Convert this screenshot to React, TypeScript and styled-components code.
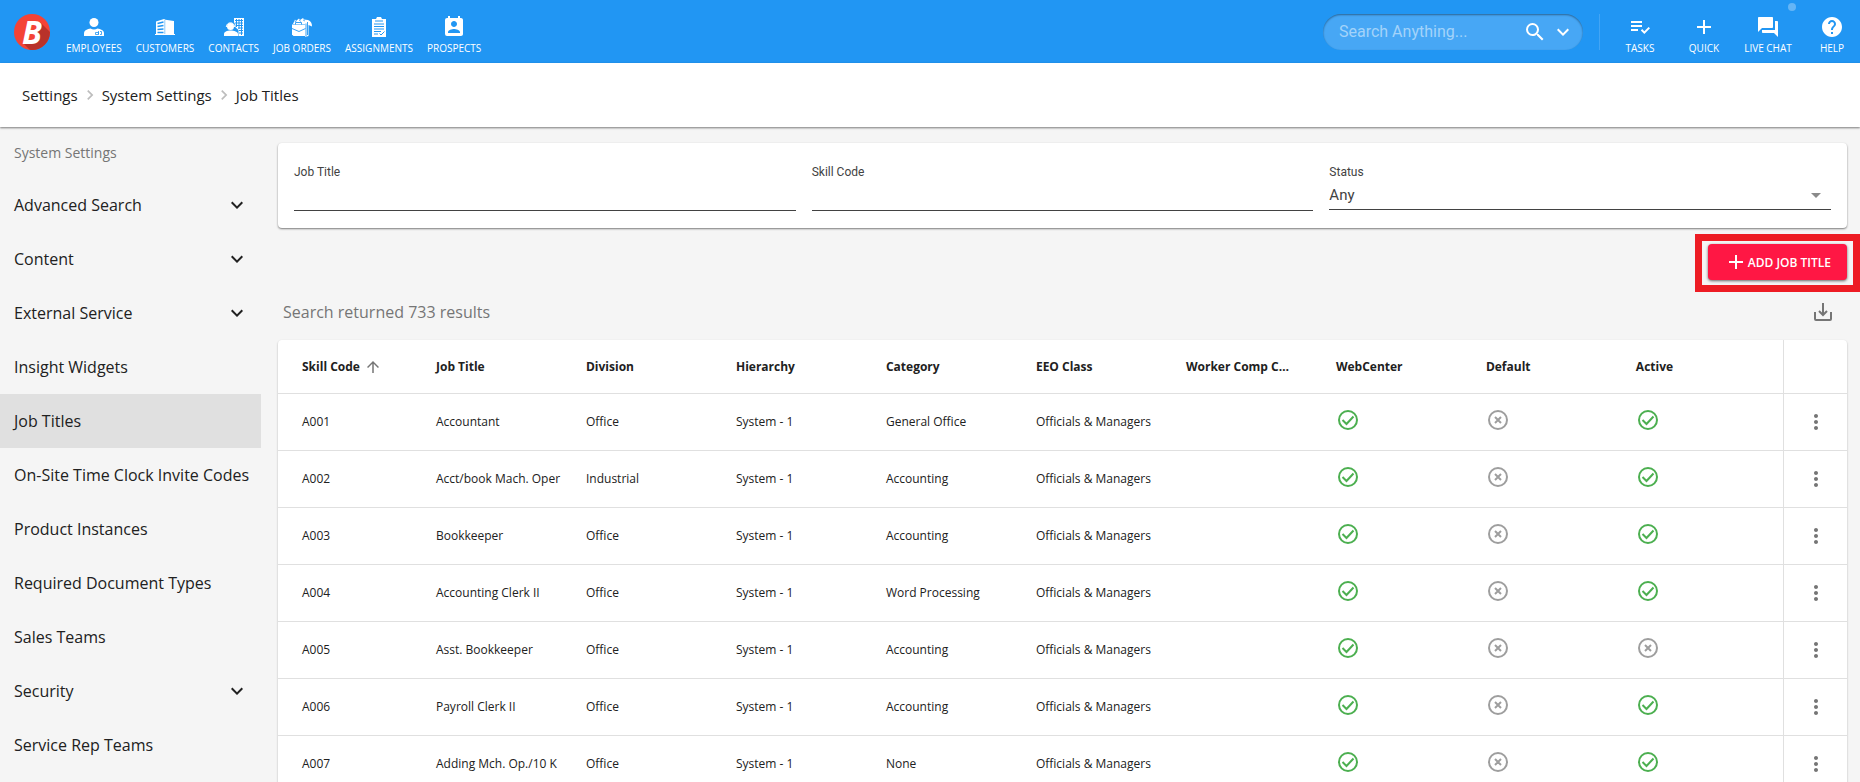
import React from 'react';
import styled, { createGlobalStyle, css } from 'styled-components';
import {
  MdSearch,
  MdExpandMore,
  MdPlaylistAddCheck,
  MdAdd,
  MdForum,
  MdHelp,
  MdPermContactCalendar,
  MdChevronRight,
  MdArrowUpward,
  MdArrowDropDown,
  MdMoreVert,
} from 'react-icons/md';

const sans = '"Open Sans", "Noto Sans", sans-serif';
const roboto = 'Roboto, "Liberation Sans", sans-serif';

const GlobalStyle = createGlobalStyle`
  *, *::before, *::after { box-sizing: border-box; }
  body {
    margin: 0;
    background: #f5f5f5;
    color: #212121;
    font-family: ${sans};
    font-size: 16px;
  }
  button, input, select { font: inherit; color: inherit; }
  a { color: inherit; text-decoration: none; }
`;

const Page = styled.div`
  display: flex;
  flex-direction: column;
  height: 100vh;
  overflow: hidden;
`;

const TopBar = styled.header`
  display: flex;
  flex: none;
  align-items: center;
  height: 63px;
  padding-left: 14px;
  background: #2196f3;
  color: #fff;
`;

const Logo = styled.a`
  position: relative;
  display: flex;
  align-items: center;
  justify-content: center;
  width: 36px;
  height: 36px;
`;

const LogoDisc = styled.svg`
  position: absolute;
  inset: 0;
`;

const LogoLetter = styled.span`
  position: relative;
  font-size: 32px;
  font-style: italic;
  font-weight: 700;
  line-height: 36px;
`;

const MainNav = styled.nav`
  display: flex;
  gap: 14px;
  margin-left: 16px;
`;

const iconLabel = css`
  display: flex;
  flex-direction: column;
  align-items: center;
  gap: 2px;
  padding: 0;
  padding-top: 7px;
  border: 0;
  background: none;
  font-size: 10px;
  line-height: 14px;
  white-space: nowrap;
  text-transform: uppercase;
  cursor: pointer;
  svg { display: block; }
`;

const NavLink = styled.a`
  ${iconLabel}
`;

const ToolButton = styled.button`
  ${iconLabel}
  position: relative;
  min-width: 56px;
`;

const StatusDot = styled.span`
  position: absolute;
  top: -5px;
  right: 0;
  width: 8px;
  height: 8px;
  border-radius: 50%;
  background: #64b5f6;
`;

const SearchBox = styled.form`
  display: flex;
  align-items: center;
  width: 260px;
  height: 36px;
  margin-left: auto;
  padding: 0 6px 0 16px;
  border-radius: 18px;
  background: #47a7f5;
  box-shadow: inset 0 1px 2px rgba(0, 0, 0, 0.4);
`;

const SearchInput = styled.input`
  flex: 1;
  min-width: 0;
  padding: 0;
  border: 0;
  outline: 0;
  background: none;
  font-family: ${roboto};
  &::placeholder { color: #a3d3fa; opacity: 1; }
`;

const GhostButton = styled.button`
  display: flex;
  align-items: center;
  justify-content: center;
  padding: 0 2px;
  border: 0;
  background: none;
  cursor: pointer;
`;

const BarDivider = styled.span`
  width: 1px;
  height: 36px;
  margin: 0 12px 0 16px;
  background: #42a5f5;
`;

const Tools = styled.div`
  display: flex;
  gap: 8px;
`;

const Breadcrumbs = styled.nav`
  display: flex;
  flex: none;
  align-items: center;
  height: 64px;
  padding-left: 22px;
  background: #fff;
  box-shadow: 0 1px 2px rgba(0, 0, 0, 0.5);
  font-size: 15px;
  z-index: 1;
  svg { margin: 0 2px; color: #bdbdbd; }
`;

const Body = styled.div`
  display: flex;
  flex: 1;
  min-height: 0;
`;

const Sidebar = styled.aside`
  flex: none;
  width: 261px;
  padding-top: 16px;
`;

const SidebarTitle = styled.h2`
  margin: 0 0 15px;
  padding-left: 14px;
  color: #757575;
  font-size: 14px;
  font-weight: 400;
  line-height: 20px;
`;

const SidebarItem = styled.a<{ $active?: boolean }>`
  display: flex;
  align-items: center;
  justify-content: space-between;
  height: 54px;
  padding: 0 12px 0 14px;
  background: ${(p) => (p.$active ? '#e0e0e0' : 'transparent')};
  white-space: nowrap;
`;

const Main = styled.main`
  flex: 1;
  min-width: 0;
  padding: 16px 0 0 17px;
`;

const FilterCard = styled.form`
  display: flex;
  align-items: flex-start;
  gap: 16px;
  height: 85px;
  margin-right: 13px;
  padding: 21px 16px 0;
  border-radius: 4px;
  background: #fff;
  box-shadow: 0 1px 2px rgba(0, 0, 0, 0.5);
`;

const Field = styled.label`
  display: flex;
  flex: 1;
  flex-direction: column;
  min-width: 0;
  color: #424242;
  font-family: ${roboto};
  font-size: 12px;
  line-height: 16px;
`;

const TextInput = styled.input`
  width: 100%;
  height: 31px;
  padding: 0;
  border: 0;
  border-bottom: 1px solid #424242;
  border-radius: 0;
  outline: 0;
  background: none;
  font-size: 15px;
`;

const SelectWrap = styled.span`
  display: flex;
  align-items: center;
  height: 30px;
  border-bottom: 1px solid #424242;
`;

const SelectInput = styled.select`
  flex: 1;
  height: 28px;
  padding: 0;
  border: 0;
  outline: 0;
  appearance: none;
  background: none;
  font-size: 15px;
`;

const SelectArrow = styled(MdArrowDropDown)`
  margin-right: 3px;
  color: #8a8a8a;
`;

const Actions = styled.div`
  display: flex;
  justify-content: flex-end;
  padding-top: 6px;
`;

const Highlight = styled.div`
  padding: 3px 6px 5px;
  border: 7px solid #ed1c24;
`;

const AddButton = styled.button`
  display: flex;
  align-items: center;
  height: 36px;
  padding: 0 16px;
  border: 0;
  border-radius: 4px;
  background: #ff1744;
  box-shadow: 0 1px 3px rgba(0, 0, 0, 0.6);
  color: #fff;
  font-size: 12px;
  font-weight: 600;
  white-space: nowrap;
  cursor: pointer;
`;

const ResultsBar = styled.div`
  display: flex;
  align-items: center;
  justify-content: space-between;
  height: 48px;
  margin-right: 13px;
  padding: 0 10px 8px 5px;
  color: #757575;
`;

const TableCard = styled.div`
  margin-right: 13px;
  border-radius: 4px 4px 0 0;
  background: #fff;
  box-shadow: 0 1px 2px rgba(0, 0, 0, 0.3);
`;

const Table = styled.table`
  width: 100%;
  border-collapse: separate;
  border-spacing: 0;
  table-layout: fixed;
  font-size: 12px;
  line-height: 16px;
  text-align: left;
`;

const cell = css`
  overflow: hidden;
  border-bottom: 1px solid #e0e0e0;
  text-overflow: ellipsis;
  white-space: nowrap;
  &:first-child { padding-left: 24px; }
  &:last-child {
    padding: 0;
    border-left: 1px solid #e0e0e0;
  }
`;

const HeadCell = styled.th`
  ${cell}
  height: 54px;
  padding: 0 38px 0 8px;
  font-weight: 700;
  &:first-child { padding-right: 8px; }
`;

const Cell = styled.td`
  ${cell}
  height: 57px;
  padding: 0 8px;
`;

const IconCell = styled(Cell)`
  padding-bottom: 4px;
  svg { display: block; }
`;

const SortButton = styled.button`
  display: flex;
  align-items: center;
  gap: 4px;
  padding: 0;
  border: 0;
  background: none;
  font-weight: 700;
  cursor: pointer;
  svg { color: #757575; }
`;

const RowMenu = styled(GhostButton)`
  width: 100%;
  padding: 0;
  color: #757575;
`;

const DataCol = styled.col`
  width: 9.56%;
`;

const MenuCol = styled.col`
  width: 64px;
`;

const BrandMark = () => (
  <>
    <LogoDisc width="36" height="36" viewBox="0 0 36 36" aria-hidden="true">
      <defs>
        <clipPath id="disc">
          <circle cx="18" cy="18" r="18" />
        </clipPath>
      </defs>
      <circle cx="18" cy="18" r="18" fill="#f44336" />
      <path d="M26 8L40 22V40H20L9 29L22 28Z" fill="#b9322a" clipPath="url(#disc)" />
    </LogoDisc>
    <LogoLetter>B</LogoLetter>
  </>
);

const glyph = {
  width: 24,
  height: 24,
  viewBox: '-2 -2 24 24',
  fill: 'currentColor',
  'aria-hidden': true,
};

const EmployeesIcon = () => (
  <svg {...glyph}>
    <circle cx="10" cy="5.500" r="4.500" />
    <path d="M0 19v-2.500C0 13 3.500 12 6.500 11.500c2 1.300 5 1.300 7 0 3 .5 6.500 1.500 6.500 5V19z" />
    <path d="M11.500 15.500h3v2h-3zM14.500 14v3.500M16 14.500h1.500v3H16" fill="none" stroke="#2196f3" strokeWidth=".8" />
  </svg>
);

const CustomersIcon = () => (
  <svg {...glyph}>
    <path d="M1 4.500L9 2l1.500.7L19 4v13.500H1z" />
    <path d="M2.500 6.500L8.500 5M2.500 9.500l6-1M2.500 12.500l6-.5M2.500 15.500h6" stroke="#2196f3" strokeWidth="1.300" />
    <path d="M9.800 3v14" stroke="#2196f3" strokeWidth=".5" />
    <path d="M0 17.500h20" stroke="currentColor" />
  </svg>
);

const ContactsIcon = () => (
  <svg {...glyph}>
    <path d="M10 1h10v18h-5.500v-6L10 9z" />
    <path d="M12.500 2v8M15 2v10M17.500 2v16M11 3.500h8M11 6h8M12 8.500h7M14 11h5M15 13.500h4M15 16h4" stroke="#2196f3" />
    <circle cx="6.500" cy="9" r="5" fill="#2196f3" />
    <circle cx="6.500" cy="9.500" r="3.500" />
    <path d="M0 19v-2c0-2.400 3-3.600 6.500-3.600S14 14.600 14 17v2z" />
    <path d="M2.300 10a4.200 4.200 0 018.400 0" fill="none" stroke="currentColor" />
  </svg>
);

const JobOrdersIcon = () => (
  <svg {...glyph}>
    <path d="M1 7L3 2.500l1 1.500L7 1.500 8 3l3-2 1 1.500L16 3c3 1 4 3.500 4 6.500l-3.500-1.500V19L13 20V7z" />
    <path d="M0 7.500h13.500V19H1.500L0 17.500z" />
    <path d="M0 11.500l7 3 6.500-3M3.500 7.500V5.500h6v2M14 6.500v13M15.500 5v13" fill="none" stroke="#2196f3" strokeWidth=".9" />
    <path d="M2.500 4l2 1M7 3l2 1.500M11 3l2 1" stroke="#2196f3" strokeWidth=".7" />
  </svg>
);

const AssignmentsIcon = () => (
  <svg {...glyph}>
    <path d="M3 2h4l1-2h4l1 2h4v18H3z" />
    <path
      d="M6 4h8M5 7h10M5 9.500h10M5 12h10M5 14.500h7M5 17h4M10.500 16.500l1.500 1.500 3.500-3.500"
      fill="none"
      stroke="#2196f3"
    />
  </svg>
);

const DownloadIcon = () => (
  <svg width="24" height="24" viewBox="0 0 24 24" fill="none" stroke="#757575" strokeWidth="2" aria-hidden="true">
    <path d="M4 12v7a1 1 0 001 1h14a1 1 0 001-1v-7M12 3v12M8 11l4 4 4-4" />
  </svg>
);

const StateIcon = ({ on }: { on: boolean }) => (
  <svg
    width="24"
    height="24"
    viewBox="0 0 24 24"
    fill="none"
    stroke={on ? '#4caf50' : '#9e9e9e'}
    strokeWidth="2"
    role="img"
    aria-label={on ? 'Yes' : 'No'}
  >
    <circle cx="12" cy="12" r="9" />
    <path d={on ? 'M6.500 12l4 4 7-7.500' : 'M9 9l6 6M15 9l-6 6'} />
  </svg>
);

const navItems = [
  { label: 'Employees', icon: <EmployeesIcon /> },
  { label: 'Customers', icon: <CustomersIcon /> },
  { label: 'Contacts', icon: <ContactsIcon /> },
  { label: 'Job Orders', icon: <JobOrdersIcon /> },
  { label: 'Assignments', icon: <AssignmentsIcon /> },
  { label: 'Prospects', icon: <MdPermContactCalendar size={24} /> },
];

const sidebarItems = [
  { label: 'Advanced Search', group: true },
  { label: 'Content', group: true },
  { label: 'External Service', group: true },
  { label: 'Insight Widgets' },
  { label: 'Job Titles', active: true },
  { label: 'On-Site Time Clock Invite Codes' },
  { label: 'Product Instances' },
  { label: 'Required Document Types' },
  { label: 'Sales Teams' },
  { label: 'Security', group: true },
  { label: 'Service Rep Teams' },
];

const columns = [
  'Job Title', 'Division', 'Hierarchy', 'Category', 'EEO Class',
  'Worker Comp Code', 'WebCenter', 'Default', 'Active',
];

const jobs = [
  { code: 'A001', title: 'Accountant', division: 'Office', category: 'General Office', active: true },
  { code: 'A002', title: 'Acct/book Mach. Oper', division: 'Industrial', category: 'Accounting', active: true },
  { code: 'A003', title: 'Bookkeeper', division: 'Office', category: 'Accounting', active: true },
  { code: 'A004', title: 'Accounting Clerk II', division: 'Office', category: 'Word Processing', active: true },
  { code: 'A005', title: 'Asst. Bookkeeper', division: 'Office', category: 'Accounting', active: false },
  { code: 'A006', title: 'Payroll Clerk II', division: 'Office', category: 'Accounting', active: true },
  { code: 'A007', title: 'Adding Mch. Op./10 K', division: 'Office', category: 'None', active: true },
];

export default function App() {
  return (
    <Page>
      <GlobalStyle />
      <TopBar>
        <Logo href="#" aria-label="Home"><BrandMark /></Logo>
        <MainNav>
          {navItems.map((item) => (
            <NavLink key={item.label} href="#">{item.icon}{item.label}</NavLink>
          ))}
        </MainNav>
        <SearchBox>
          <SearchInput aria-label="Search" placeholder="Search Anything..." />
          <GhostButton type="button" aria-label="Search"><MdSearch size={24} /></GhostButton>
          <GhostButton type="button" aria-label="Search options"><MdExpandMore size={24} /></GhostButton>
        </SearchBox>
        <BarDivider />
        <Tools>
          <ToolButton><MdPlaylistAddCheck size={24} />Tasks</ToolButton>
          <ToolButton><MdAdd size={24} />Quick</ToolButton>
          <ToolButton><MdForum size={24} />Live Chat<StatusDot /></ToolButton>
          <ToolButton><MdHelp size={24} />Help</ToolButton>
        </Tools>
      </TopBar>
      <Breadcrumbs aria-label="Breadcrumb">
        <a href="#">Settings</a>
        <MdChevronRight size={20} />
        <a href="#">System Settings</a>
        <MdChevronRight size={20} />
        <a href="#">Job Titles</a>
      </Breadcrumbs>
      <Body>
        <Sidebar>
          <SidebarTitle>System Settings</SidebarTitle>
          {sidebarItems.map((item) => (
            <SidebarItem key={item.label} href="#" $active={item.active}>
              {item.label}
              {item.group && <MdExpandMore size={24} />}
            </SidebarItem>
          ))}
        </Sidebar>
        <Main>
          <FilterCard>
            <Field>Job Title<TextInput /></Field>
            <Field>Skill Code<TextInput /></Field>
            <Field>
              Status
              <SelectWrap>
                <SelectInput><option>Any</option></SelectInput>
                <SelectArrow size={24} />
              </SelectWrap>
            </Field>
          </FilterCard>
          <Actions>
            <Highlight>
              <AddButton><MdAdd size={24} />ADD JOB TITLE</AddButton>
            </Highlight>
          </Actions>
          <ResultsBar>
            <span>Search returned 733 results</span>
            <GhostButton aria-label="Download"><DownloadIcon /></GhostButton>
          </ResultsBar>
          <TableCard>
            <Table>
              <colgroup>
                {Array.from({ length: 9 }, (_, i) => <DataCol key={i} />)}
                <col />
                <MenuCol />
              </colgroup>
              <thead>
                <tr>
                  <HeadCell><SortButton>Skill Code<MdArrowUpward size={18} /></SortButton></HeadCell>
                  {columns.map((name) => <HeadCell key={name}>{name}</HeadCell>)}
                  <HeadCell />
                </tr>
              </thead>
              <tbody>
                {jobs.map((job) => (
                  <tr key={job.code}>
                    <Cell>{job.code}</Cell>
                    <Cell>{job.title}</Cell>
                    <Cell>{job.division}</Cell>
                    <Cell>System - 1</Cell>
                    <Cell>{job.category}</Cell>
                    <Cell>Officials &amp; Managers</Cell>
                    <Cell />
                    <IconCell><StateIcon on /></IconCell>
                    <IconCell><StateIcon on={false} /></IconCell>
                    <IconCell><StateIcon on={job.active} /></IconCell>
                    <Cell>
                      <RowMenu aria-label={`Actions for ${job.code}`}><MdMoreVert size={24} /></RowMenu>
                    </Cell>
                  </tr>
                ))}
              </tbody>
            </Table>
          </TableCard>
        </Main>
      </Body>
    </Page>
  );
}
